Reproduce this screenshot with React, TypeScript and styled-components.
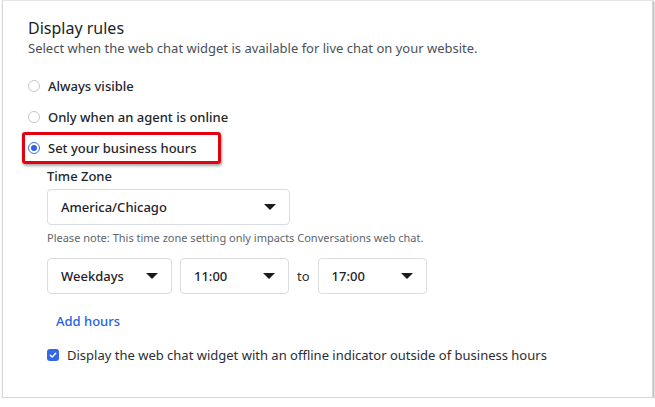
import React from "react";
import styled, { createGlobalStyle } from "styled-components";

const GlobalStyle = createGlobalStyle`
  body {
    margin: 0;
    background: #ffffff;
    font-family: "Noto Sans", "Open Sans", sans-serif;
    color: #1f2329;
  }
`;

const Card = styled.div`
  box-sizing: border-box;
  width: 651px;
  height: 398px;
  margin-left: 2px;
  background: #fff;
  border: 1px solid #d6d6d6;
  border-top-color: #e4e4e4;
  box-shadow: 1px 1px 2px rgba(0, 0, 0, 0.35);
  padding: 17px 0 0 25px;
`;

const Title = styled.h2`
  margin: 0;
  font-size: 16px;
  font-weight: 400;
  line-height: 20px;
  color: #1b1f24;
`;

const Subtitle = styled.p`
  margin: 1px 0 0;
  font-size: 13px;
  line-height: 18px;
  color: #4a4f57;
`;

const Options = styled.div`
  display: flex;
  flex-direction: column;
  gap: 13px;
  margin-top: 20px;
`;

const OptionRow = styled.label<{ $highlight?: boolean }>`
  position: relative;
  display: flex;
  align-items: center;
  gap: 8px;
  font-size: 13px;
  font-weight: 500;
  line-height: 18px;
  color: #22262b;
  align-self: flex-start;

  &::before {
    content: "";
    display: ${(p) => (p.$highlight ? "block" : "none")};
    position: absolute;
    top: -7px;
    bottom: -7px;
    left: -6px;
    right: -24px;
    border: 3px solid #e3000f;
    border-radius: 3px;
    box-shadow: 1px 2px 3px rgba(0, 0, 0, 0.35);
  }
`;

const Radio = styled.span<{ $checked?: boolean }>`
  box-sizing: border-box;
  width: 12px;
  height: 12px;
  border-radius: 50%;
  border: 1px solid ${(p) => (p.$checked ? "#3b6fe8" : "#c4c7cc")};
  background: #fff;
  display: flex;
  align-items: center;
  justify-content: center;
  &::after {
    content: "";
    width: 6px;
    height: 6px;
    border-radius: 50%;
    background: ${(p) => (p.$checked ? "#2f63e3" : "transparent")};
  }
`;

const Nested = styled.div`
  margin-left: 19px;
  margin-top: -3px;
  display: flex;
  flex-direction: column;
`;

const FieldLabel = styled.div`
  font-size: 13px;
  font-weight: 500;
  line-height: 18px;
  color: #22262b;
`;

const Select = styled.div<{ $width: number }>`
  box-sizing: border-box;
  width: ${(p) => p.$width}px;
  height: 36px;
  border: 1px solid #d9dce0;
  border-radius: 4px;
  display: flex;
  align-items: center;
  justify-content: space-between;
  padding: 0 13px;
  font-size: 13px;
  font-weight: 500;
  color: #1f2329;
  background: #fff;
`;

const SelectWrap = styled.div`
  margin-top: 4px;
`;

const Caret = styled.span`
  width: 0;
  height: 0;
  border-left: 6px solid transparent;
  border-right: 6px solid transparent;
  border-top: 6px solid #1b1b1b;
`;

const Note = styled.div`
  margin-top: 6px;
  font-size: 11px;
  line-height: 14px;
  color: #60656d;
`;

const HoursRow = styled.div`
  display: flex;
  align-items: center;
  gap: 8px;
  margin-top: 13px;
`;

const To = styled.span`
  font-size: 13px;
  color: #2a2e33;
`;

const AddHours = styled.a`
  margin: 18px 0 0 9px;
  align-self: flex-start;
  font-size: 13px;
  font-weight: 500;
  color: #1f5fe6;
  text-decoration: none;
  line-height: 18px;
`;

const CheckRow = styled.label`
  display: flex;
  align-items: center;
  gap: 8px;
  margin-top: 16px;
  font-size: 13px;
  color: #2a2e33;
  line-height: 18px;
`;

const CheckBox = styled.span`
  width: 12px;
  height: 12px;
  border-radius: 3px;
  background: #3566e5;
  display: flex;
  align-items: center;
  justify-content: center;
`;

const SelectBox = ({ value, width }: { value: string; width: number }) => (
  <Select $width={width}>
    <span>{value}</span>
    <Caret />
  </Select>
);

export default function App() {
  return (
    <>
      <GlobalStyle />
      <Card>
        <Title>Display rules</Title>
        <Subtitle>
          Select when the web chat widget is available for live chat on your website.
        </Subtitle>
        <Options>
          <OptionRow>
            <Radio />
            Always visible
          </OptionRow>
          <OptionRow>
            <Radio />
            Only when an agent is online
          </OptionRow>
          <OptionRow $highlight>
            <Radio $checked />
            Set your business hours
          </OptionRow>
          <Nested>
            <FieldLabel>Time Zone</FieldLabel>
            <SelectWrap>
              <SelectBox value="America/Chicago" width={243} />
            </SelectWrap>
            <Note>Please note: This time zone setting only impacts Conversations web chat.</Note>
            <HoursRow>
              <SelectBox value="Weekdays" width={125} />
              <SelectBox value="11:00" width={109} />
              <To>to</To>
              <SelectBox value="17:00" width={109} />
            </HoursRow>
            <AddHours href="#">Add hours</AddHours>
            <CheckRow>
              <CheckBox>
                <svg width="8" height="8" viewBox="0 0 8 8">
                  <path d="M1.3 4.2 L3.2 6 L6.7 2.2" fill="none" stroke="#fff" strokeWidth="1.5" strokeLinecap="round" strokeLinejoin="round" />
                </svg>
              </CheckBox>
              Display the web chat widget with an offline indicator outside of business hours
            </CheckRow>
          </Nested>
        </Options>
      </Card>
    </>
  );
}
